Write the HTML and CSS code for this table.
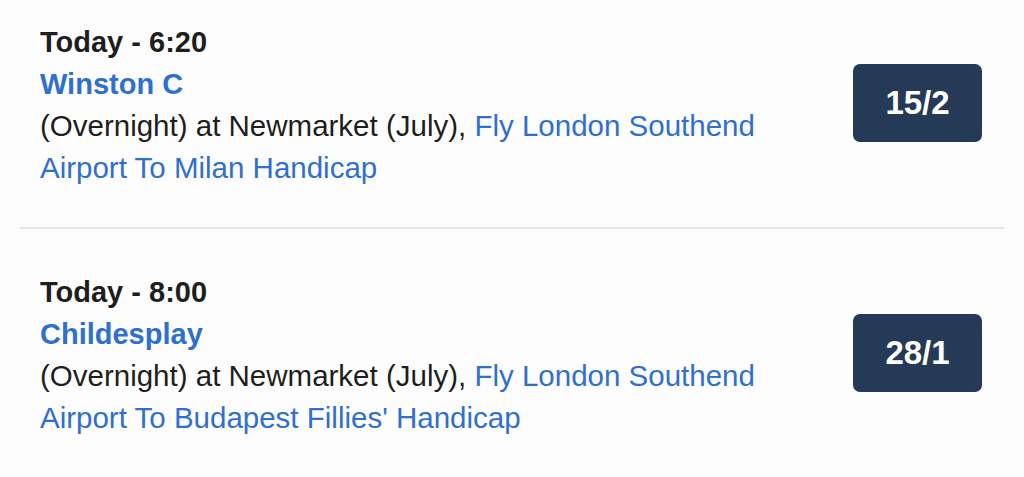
FILE: index.html
```html
<!DOCTYPE html>
<html>
<head>
<meta charset="utf-8">
<link rel="stylesheet" href="styles.css">
</head>
<body>
<ul class="list">
  <li class="item">
    <div class="info">
      <div class="when">Today - 6:20</div>
      <a class="horse" href="#">Winston C</a>
      <p class="race"><span class="venue">(Overnight) at Newmarket (July), </span><a href="#">Fly London Southend Airport To Milan Handicap</a></p>
    </div>
    <div class="odds">15/2</div>
  </li>
  <li class="item">
    <div class="info">
      <div class="when">Today - 8:00</div>
      <a class="horse" href="#">Childesplay</a>
      <p class="race"><span class="venue">(Overnight) at Newmarket (July), </span><a href="#">Fly London Southend Airport To Budapest Fillies' Handicap</a></p>
    </div>
    <div class="odds">28/1</div>
  </li>
</ul>
</body>
</html>
```
FILE: styles.css
```css
html, body {
  margin: 0;
  padding: 0;
  background: #fdfdfd;
}
body {
  font-family: "Liberation Sans", Arial, sans-serif;
  color: #1e1e1e;
  overflow: hidden;
}
.list {
  list-style: none;
  margin: -19px 20px 0;
  padding: 0;
}
.item {
  display: flex;
  align-items: center;
  padding: 40px 22px 38px 20px;
  border-bottom: 2px solid #e6e6e6;
}
.item + .item {
  padding-top: 42px;
}
.info {
  flex: 1;
  font-size: 29.5px;
  line-height: 42px;
  padding-right: 40px;
}
.when {
  font-weight: bold;
  font-size: 29px;
}
.horse {
  display: block;
  font-weight: bold;
  font-size: 29px;
  color: #2f6fd0;
  text-decoration: none;
}
.race {
  margin: 0;
}
.race a {
  color: #2f6fd0;
  text-decoration: none;
}
.odds {
  width: 129px;
  height: 78px;
  margin-bottom: 4px;
  border-radius: 7px;
  background: #243a56;
  color: #fff;
  font-size: 33px;
  font-weight: bold;
  display: flex;
  align-items: center;
  justify-content: center;
}
```
